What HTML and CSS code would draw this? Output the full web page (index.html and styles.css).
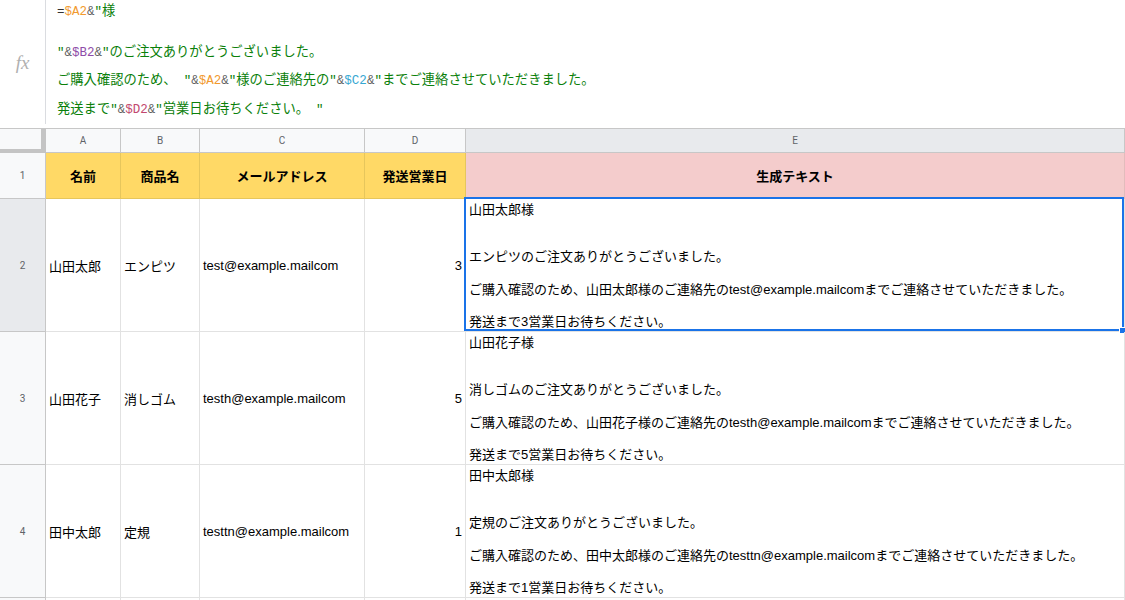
FILE: index.html
```html
<!DOCTYPE html>
<html lang="ja">
<head>
<meta charset="utf-8">
<link rel="stylesheet" href="styles.css">
</head>
<body>
<div class="app">
  <div class="fbar">
    <div class="fx-box"><span class="fx">fx</span></div>
    <div class="formula">
      <div class="fl fl1"><span class="a k">=</span><span class="a r1">$A2</span><span class="a op">&amp;</span><span class="a s">"</span><span class="s">様</span></div>
      <div class="fl fl2"><span class="a s">"</span><span class="a op">&amp;</span><span class="a r2">$B2</span><span class="a op">&amp;</span><span class="a s">"</span><span class="s">のご注文ありがとうございました。</span></div>
      <div class="fl"><span class="s">ご購入確認のため、</span><span class="a s gapl">"</span><span class="a op">&amp;</span><span class="a r1">$A2</span><span class="a op">&amp;</span><span class="a s">"</span><span class="s">様のご連絡先の</span><span class="a s">"</span><span class="a op">&amp;</span><span class="a r3">$C2</span><span class="a op">&amp;</span><span class="a s">"</span><span class="s">までご連絡させていただきました。</span></div>
      <div class="fl"><span class="s">発送まで</span><span class="a s">"</span><span class="a op">&amp;</span><span class="a r4">$D2</span><span class="a op">&amp;</span><span class="a s">"</span><span class="s">営業日お待ちください。</span><span class="a s gapl">"</span></div>
    </div>
  </div>

  <div class="sheet">
    <div class="corner"></div>
    <div class="ch">A</div>
    <div class="ch">B</div>
    <div class="ch">C</div>
    <div class="ch">D</div>
    <div class="ch sel">E</div>

    <div class="rh">1</div>
    <div class="hd">名前</div>
    <div class="hd">商品名</div>
    <div class="hd">メールアドレス</div>
    <div class="hd">発送営業日</div>
    <div class="hd pink">生成テキスト</div>

    <div class="rh sel">2</div>
    <div class="c">山田太郎</div>
    <div class="c">エンピツ</div>
    <div class="c">test@example.mailcom</div>
    <div class="c num">3</div>
    <div class="c gen active">
      <p>山田太郎様</p>
      <p class="g3">エンピツのご注文ありがとうございました。</p>
      <p class="g2">ご購入確認のため、山田太郎様のご連絡先のtest@example.mailcomまでご連絡させていただきました。</p>
      <p class="g2">発送まで3営業日お待ちください。</p>
      <span class="selbox"><span class="handle"></span></span>
    </div>

    <div class="rh">3</div>
    <div class="c">山田花子</div>
    <div class="c">消しゴム</div>
    <div class="c">testh@example.mailcom</div>
    <div class="c num">5</div>
    <div class="c gen">
      <p>山田花子様</p>
      <p class="g3">消しゴムのご注文ありがとうございました。</p>
      <p class="g2">ご購入確認のため、山田花子様のご連絡先のtesth@example.mailcomまでご連絡させていただきました。</p>
      <p class="g2">発送まで5営業日お待ちください。</p>
    </div>

    <div class="rh">4</div>
    <div class="c">田中太郎</div>
    <div class="c">定規</div>
    <div class="c">testtn@example.mailcom</div>
    <div class="c num">1</div>
    <div class="c gen">
      <p>田中太郎様</p>
      <p class="g3">定規のご注文ありがとうございました。</p>
      <p class="g2">ご購入確認のため、田中太郎様のご連絡先のtesttn@example.mailcomまでご連絡させていただきました。</p>
      <p class="g2">発送まで1営業日お待ちください。</p>
    </div>

    <div class="rh"></div>
    <div class="c"></div>
    <div class="c"></div>
    <div class="c"></div>
    <div class="c"></div>
    <div class="c"></div>
  </div>
</div>
</body>
</html>
```

FILE: styles.css
```css
* { box-sizing: border-box; }
html, body { margin: 0; padding: 0; background: #fff; }
body {
  width: 1125px;
  height: 600px;
  overflow: hidden;
  font-family: "Liberation Sans", "Noto Sans CJK JP", sans-serif;
  font-size: 13px;
  color: #000;
}
.app { display: flex; flex-direction: column; }

/* formula bar */
.fbar {
  display: flex;
  height: 129px;
  border-bottom: 1px solid #c7c7c7;
  overflow: hidden;
}
.fx-box {
  width: 46px;
  height: 124px;
  border-right: 1px solid #dadce0;
  display: flex;
  align-items: center;
  justify-content: center;
  flex: none;
}
.fx {
  font-family: "Liberation Serif", serif;
  font-style: italic;
  font-size: 19px;
  color: #b0b0b0;
  margin-top: 1px;
}
.formula {
  padding-left: 11px;
  font-family: "Noto Sans CJK JP", sans-serif;
  font-size: 13.3px;
}
.fl { line-height: 26.5px; white-space: pre; }
.fl1 { margin-top: -3px; }
.fl2 { margin-top: 12px; }
.a { font-family: "Liberation Mono", monospace; font-size: 12.5px; }
.gapl { margin-left: 7px; }
.k { color: #333; }
.op { color: #5f5f5f; }
.s { color: #0a800a; }
.r1 { color: #f29a2e; }
.r2 { color: #8e4ba8; }
.r3 { color: #36a7d2; }
.r4 { color: #c2476e; }

/* grid */
.sheet {
  display: grid;
  grid-template-columns: 46px 75px 79px 165px 101px 659px;
  grid-template-rows: 24px 46px 133px 133px 133px 3px;
}
.corner {
  background: #f8f9fa;
  border-right: 5px solid #c4c4c4;
  border-bottom: 4px solid #c4c4c4;
}
.ch {
  background: #f8f9fa;
  border-right: 1px solid #c7c7c7;
  border-bottom: 1px solid #c7c7c7;
  font-family: "Roboto", "Liberation Sans", sans-serif;
  font-size: 10px;
  color: #5f6368;
  display: flex;
  align-items: center;
  justify-content: center;
}
.ch.sel, .rh.sel { background: #e8eaed; }
.rh {
  background: #f8f9fa;
  border-right: 1px solid #c7c7c7;
  border-bottom: 1px solid #c7c7c7;
  font-family: "Roboto", "Liberation Sans", sans-serif;
  font-size: 10px;
  color: #5f6368;
  display: flex;
  align-items: center;
  justify-content: center;
}
.hd {
  background: #ffd966;
  border-right: 1px solid #e6c65c;
  border-bottom: 1px solid #e6c65c;
  font-weight: bold;
  display: flex;
  align-items: center;
  justify-content: center;
}
.hd.pink {
  background: #f4cccc;
  border-right: 1px solid #e2bcbc;
  border-bottom: 1px solid #e2bcbc;
}
.c {
  border-right: 1px solid #e2e2e2;
  border-bottom: 1px solid #e2e2e2;
  padding: 0 3px;
  display: flex;
  align-items: center;
  white-space: nowrap;
}
.c.num { justify-content: flex-end; }
.c.gen {
  display: block;
  padding-top: 3px;
  position: relative;
}
.gen p { margin: 0; line-height: 16px; white-space: nowrap; }
.gen .g3 { margin-top: 31px; }
.gen .g2 { margin-top: 16.5px; }
.selbox {
  position: absolute;
  top: -2px;
  left: -2px;
  right: 0;
  bottom: 0;
  border: 2px solid #1a73e8;
}
.handle {
  position: absolute;
  right: -4px;
  bottom: -5px;
  width: 7px;
  height: 7px;
  background: #1a73e8;
  border: 1px solid #fff;
}
```
